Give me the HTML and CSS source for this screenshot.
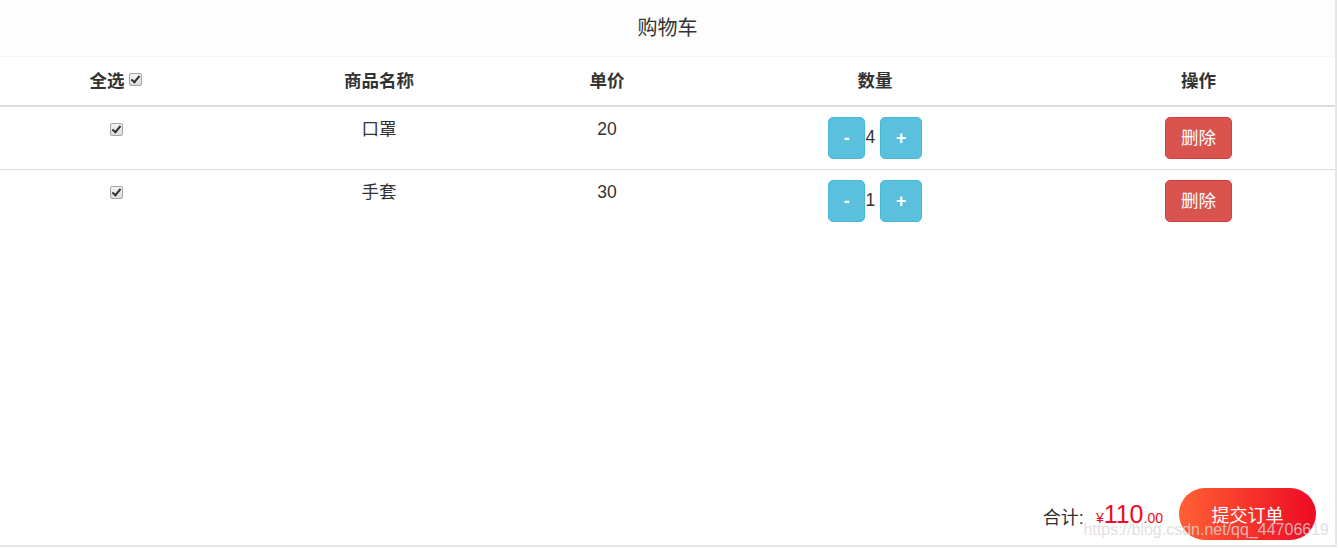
FILE: index.html
```html
<!DOCTYPE html>
<html lang="zh-CN">
  <head>
    <meta charset="UTF-8" />
    <meta name="viewport" content="width=device-width, initial-scale=1.0" />
    <title>购物车</title>
    <link rel="stylesheet" href="styles.css">
  </head>
  <body>
    <div class="cart">
      <div class="cart-title">购物车</div>
      <table class="cart-table">
        <colgroup>
          <col style="width: 232px" />
          <col style="width: 294px" />
          <col style="width: 162px" />
          <col style="width: 374px" />
          <col />
        </colgroup>
        <thead>
          <tr>
            <th>全选 <input type="checkbox" class="check" checked /></th>
            <th>商品名称</th>
            <th>单价</th>
            <th>数量</th>
            <th>操作</th>
          </tr>
        </thead>
        <tbody>
          <tr>
            <td><input type="checkbox" class="check" checked /></td>
            <td>口罩</td>
            <td>20</td>
            <td><button class="btn btn-info">-</button>4 <button class="btn btn-info">+</button></td>
            <td><button class="btn btn-danger">删除</button></td>
          </tr>
          <tr>
            <td><input type="checkbox" class="check" checked /></td>
            <td>手套</td>
            <td>30</td>
            <td><button class="btn btn-info">-</button>1 <button class="btn btn-info">+</button></td>
            <td><button class="btn btn-danger">删除</button></td>
          </tr>
        </tbody>
      </table>

      <div class="cart-footer">
        <span class="total-label">合计:</span>
        <span class="price"><span class="yen">¥</span><span class="int">110</span><span class="dec">.00</span></span>
        <button class="submit">提交订单</button>
      </div>
      <div class="watermark">https://blog.csdn.net/qq_44706619</div>
    </div>
  </body>
</html>
```

FILE: styles.css
```css
body {
  margin: 0;
  background-color: #fff;
  font-family: "Liberation Sans", "Noto Sans CJK SC", sans-serif;
  font-size: 17.5px;
  color: #333;
}

.cart {
  position: relative;
  width: 1335px;
  height: 545px;
  border-right: 2px solid #e6e6e6;
  border-bottom: 2px solid #e6e6e6;
  display: flex;
  flex-direction: column;
}

.cart-title {
  height: 56px;
  line-height: 56px;
  text-align: center;
  font-size: 20px;
  background-color: #fdfdfd;
  border-bottom: 1px solid #f6f6f6;
}

.cart-table {
  width: 100%;
  border-collapse: collapse;
  table-layout: fixed;
}

.cart-table th {
  height: 28px;
  padding: 10px;
  font-weight: bold;
  text-align: center;
  vertical-align: middle;
  line-height: 25px;
  border-bottom: 2px solid #ddd;
}

.cart-table td {
  padding: 10px;
  text-align: center;
  vertical-align: top;
  line-height: 25px;
}

.cart-table tbody tr + tr td {
  border-top: 1px solid #ddd;
}

.check {
  appearance: none;
  -webkit-appearance: none;
  position: relative;
  width: 13px;
  height: 13px;
  margin: 4px 0 0;
  border: 1px solid #a6a6a6;
  border-radius: 2px;
  background: linear-gradient(#f4f4f4, #dcdcdc);
  vertical-align: top;
}

.check:checked::after {
  content: "";
  position: absolute;
  left: 3px;
  top: 0px;
  width: 3px;
  height: 7px;
  border: solid #333;
  border-width: 0 2px 2px 0;
  transform: rotate(40deg);
}

th .check {
  margin-top: 4px;
}

td .check {
  margin-top: 6px;
}

.btn {
  display: inline-block;
  padding: 7.5px 15px;
  font-family: inherit;
  font-size: 17.5px;
  line-height: 25px;
  border: 1px solid transparent;
  border-radius: 5px;
  color: #fff;
  vertical-align: middle;
  cursor: pointer;
}

.btn-info {
  background-color: #5bc0de;
  border-color: #46b8da;
  font-weight: bold;
}

.btn-danger {
  background-color: #d9534f;
  border-color: #d43f3a;
}

.cart-footer {
  margin-top: auto;
  display: flex;
  justify-content: flex-end;
  align-items: center;
  padding: 0 19px 5px 0;
}

.total-label {
  font-size: 18px;
  margin-right: 12px;
  padding-top: 4px;
}

.price {
  color: #ee0a24;
  margin-right: 16px;
}

.yen {
  font-size: 14px;
}

.int {
  font-size: 25px;
}

.dec {
  font-size: 14px;
}

.submit {
  width: 137px;
  height: 52px;
  border: none;
  border-radius: 26px;
  background: linear-gradient(to right, #ff6034, #ee0a24);
  color: #fff;
  font-family: inherit;
  font-size: 18px;
}

.watermark {
  position: absolute;
  right: 6px;
  bottom: 6px;
  font-size: 16px;
  color: rgba(215, 215, 215, 0.8);
  pointer-events: none;
}
```
